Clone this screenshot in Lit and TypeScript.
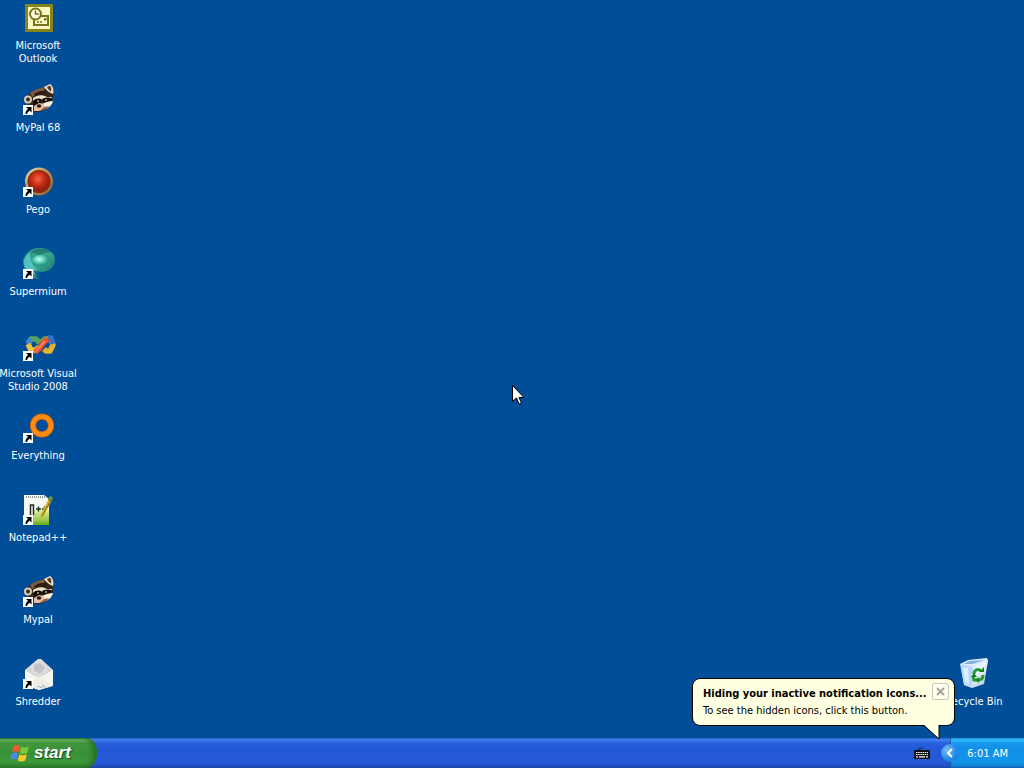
import { LitElement, html, css, svg, TemplateResult, SVGTemplateResult } from "lit";
import { customElement, property } from "lit/decorators.js";

const arrow = svg`
  <rect x="1" y="21" width="10" height="10" fill="#fff"/>
  <path d="M4 23h5.500v5.500l-1.800-1.800c-1.800 1-2.300 1.800-2.500 3.300h-1.700c0-2.600 1-4 2.600-5z" fill="#000"/>`;

const raccoon = svg`
  <path d="M4 14C6 9 11 7 16 5l7-2 5-2c3 2 4 6 3 11 0 6-2 10-7 13-4 3-10 4-14 2l-4-7z" fill="#3a271b"/>
  <path d="M8 9c4-3 10-5 15-6l-1 4-12 6z" fill="#7d5c40"/>
  <path d="M12 10c4-3 9-4 13-3l-2 4-9 3z" fill="#2c1c13"/>
  <path d="M22 3l6-3c3 2 4 6 3 10-3-1-6-3-9-7z" fill="#efe0c4"/>
  <path d="M25 3l3-1.500c1.500 2 1.500 4 1 6-2-1-3-2-4-4.500z" fill="#5d3c27"/>
  <circle cx="6" cy="15.500" r="3" fill="#3b2b20" stroke="#d8cbb4" stroke-width="2"/>
  <path d="M11 14c4-3 9-4 14-1l5 0-1 2c-4 0-6 0-9 1-3 0-6 1-9 2z" fill="#f3e3c6"/>
  <path d="M11 17c3-3 7-3 9-1l-1 5-7 1zM20 15c4-2 8-2 10 0l-2 4-6 1z" fill="#120d0b"/>
  <path d="M20 20c4-2 7-3 11-3-1 4-4 7-8 8l-4-2z" fill="#fff2da"/>
  <path d="M12 22l5-3 5 1c1 3-1 6-5 7h-5z" fill="#e9c0a5"/>
  <ellipse cx="17" cy="22" rx="2.300" ry="1.800" fill="#2a1915"/>
  <path d="M22 23l5-1c-2 3-5 4-9 5z" fill="#9c6340"/>
  <circle cx="16" cy="17" r="1" fill="#c9b08c"/><circle cx="24" cy="16" r="1" fill="#c9b08c"/>${arrow}`;

const ICONS: Record<string, SVGTemplateResult> = {
  outlook: svg`
    <rect x="3" y="2" width="28" height="28" fill="#85851a"/>
    <rect x="6" y="5" width="22" height="22" fill="#fbf6c4"/>
    <rect x="12" y="14" width="14" height="9" fill="#fbf6c4" stroke="#77751a" stroke-width="2"/>
    <circle cx="13.500" cy="12" r="5.500" fill="#fffbe0" stroke="#77751a" stroke-width="2"/>
    <path d="M13.500 8.500V12H17" fill="none" stroke="#77751a" stroke-width="1.500"/>
    <path d="M15 20h6" stroke="#77751a" stroke-width="1.500" stroke-dasharray="2 1"/>
    <rect x="22" y="16" width="2.500" height="2.500" fill="#77751a"/>`,
  raccoon,
  pego: svg`
    <defs>
      <linearGradient id="ring" x1="0" y1="0" x2="1" y2="1"><stop offset="0" stop-color="#e9dfb4"/><stop offset=".5" stop-color="#b98c54"/><stop offset="1" stop-color="#8a5a2c"/></linearGradient>
      <radialGradient id="ball" cx=".45" cy=".38"><stop offset="0" stop-color="#f2684a"/><stop offset=".6" stop-color="#cc2c14"/><stop offset="1" stop-color="#98200e"/></radialGradient>
    </defs>
    <circle cx="17" cy="15.500" r="14" fill="url(#ring)"/>
    <circle cx="17" cy="15.500" r="11.500" fill="#7a3010"/>
    <circle cx="17" cy="15.500" r="10.500" fill="url(#ball)"/>${arrow}`,
  supermium: svg`
    <defs>
      <linearGradient id="sea" x1="0" y1="0" x2="1" y2="1"><stop offset="0" stop-color="#2c958e"/><stop offset=".5" stop-color="#38a78f"/><stop offset="1" stop-color="#145f6c"/></linearGradient>
      <radialGradient id="pearl" cx=".4" cy=".35"><stop offset="0" stop-color="#c9fff0"/><stop offset=".6" stop-color="#58cdb2"/><stop offset="1" stop-color="#279983"/></radialGradient>
    </defs>
    <path d="M1 13C3 5 9 0 17 0c8 0 16 4 16 12 0 7-6 12-13 12-3 0-5-1-6-1l2 8c-8-1-14-6-15-18z" fill="url(#sea)"/>
    <path d="M2 14C3 9 5 6 8 5c0 7 2 12 7 17l-2 4C8 26 2 21 2 14z" fill="#52bfc0"/>
    <path d="M9 4c6-5 17-4 21 1-5-1-9 0-12 2z" fill="#257e72"/>
    <ellipse cx="19" cy="13" rx="9" ry="6" fill="url(#pearl)"/>
    <path d="M12 22l4 2 1 7-3-1z" fill="#1e5f91"/>${arrow}`,
  studio: svg`
    <g fill="none" stroke-width="5.500" stroke-linejoin="round">
      <path d="M6 14l3-5h5l4 4" stroke="#57a45a"/>
      <path d="M6 14l3-5" stroke="#3e86cf"/>
      <path d="M6 14l3 6h5l3-3" stroke="#e9c43a"/>
      <path d="M22 19l2 2h4l3-6-2-5" stroke="#e2b22e"/>
      <path d="M20 12l3-3h5" stroke="#6ab04c"/>
      <path d="M26 8h3l2 6" stroke="#396fc6"/>
      <path d="M13 22l4-3 5-7 4-3" stroke="#e94f2c"/>
      <path d="M14 21l9-10" stroke="#ff8059" stroke-width="2"/>
    </g>${arrow}`,
  everything: svg`
    <circle cx="20" cy="13.500" r="9" fill="none" stroke="#e86b00" stroke-width="6"/>
    <circle cx="20" cy="13.500" r="9" fill="none" stroke="#ff8d14" stroke-width="4"/>${arrow}`,
  notepad: svg`
    <defs><linearGradient id="lime" x1="0" y1="0" x2="0" y2="1"><stop offset="0" stop-color="#e4f4b0"/><stop offset="1" stop-color="#6aac14"/></linearGradient></defs>
    <path d="M2 1h20l5 4v26H2z" fill="#f5f8f4"/>
    <path d="M4 3h19" stroke="#8c9c90" stroke-width="2" stroke-dasharray="1 1"/>
    <path d="M11 16h16v15H11z" fill="url(#lime)"/>
    <path d="M12 20h13M12 23h13M12 26h13" stroke="#b8d878" stroke-dasharray="2 1"/>
    <path d="M8.500 22V11h3v10M14 15h5m-2.500-2.500v5M20 15h5m-2.500-2.500v5" fill="none" stroke="#23301d" stroke-width="1.500"/>
    <path d="M28 2l3 2-9 18-4 4 1-6z" fill="#d9b52e"/>
    <path d="M28 2l3 2-2 4-3-2z" fill="#64952b"/>
    <path d="M29 6l-9 16" stroke="#82651c"/>${arrow}`,
  shredder: svg`
    <path d="M3 12L16 1l3 0 12 11v16l-14 4-14-5z" fill="#e2e2df"/>
    <path d="M5 12L17 2l12 10-6 6H10z" fill="#d2d3d4"/>
    <path d="M8 8l6-5 4-1 7 6 1 5-8 5-7-3z" fill="#dcdbdd"/>
    <path d="M12 7l6-2 5 5-5 6-6-3z" fill="#c3c2c8"/>
    <path d="M3 12l13 8-13 8zM31 12l-14 8 14 8z" fill="#f5f4ef"/>
    <path d="M5 28l11-9 2 0 12 9-13 4z" fill="#eeede6"/>
    <path d="M15 30l2-2 2 2 2-3 2 3" fill="none" stroke="#9db6c9"/>${arrow}`,
  bin: svg`
    <defs><linearGradient id="glass" x1="0" y1="0" x2="1" y2="1"><stop offset="0" stop-color="#a9ccf4"/><stop offset=".5" stop-color="#eef6ff"/><stop offset="1" stop-color="#a9c2dc"/></linearGradient></defs>
    <path d="M2 6l27-5 1 2-4 23-12 4-8-3z" fill="url(#glass)"/>
    <path d="M2 6L10 2l19-2 1 3-15 5z" fill="#dcecff"/>
    <path d="M6 6l5-3 15-1-11 4z" fill="#86b1e3"/>
    <path d="M3 7l12 2-1 20-8-3z" fill="#b5d6fa"/>
    <path d="M5 9l5 1 1 16-4-2z" fill="#deeeff"/>
    <g fill="none" stroke="#259a2e" stroke-width="3">
      <path d="M16 16c0-4 4-6 7-3"/><path d="M25 17c0 4-2 5-5 5"/><path d="M15 18l1 4h3"/>
    </g>
    <path d="M21 14h5V9zM21 19v6l-4-3zM13 19h6l-3-4z" fill="#188222"/>`,
};

@customElement("desktop-icon")
export class DesktopIcon extends LitElement {
  @property() icon = "";
  @property({ attribute: false }) lines: string[] = [];

  static styles = css`
    :host { display: block; }
    .item {
      display: flex; flex-direction: column; align-items: center; gap: 5px;
      width: 76px; height: 82px; padding: 2px 0 0; border: 0; background: none;
      color: #fff; font: inherit; line-height: 13px; text-align: center;
    }
    .picture { width: 32px; height: 32px; flex: none; overflow: visible; }
    .line { display: block; white-space: nowrap; }
    .label { display: flex; flex-direction: column; align-items: center; }
  `;

  render(): TemplateResult {
    return html`<button class="item" type="button">
      <svg class="picture" viewBox="0 0 32 32" aria-hidden="true">${ICONS[this.icon]}</svg>
      <span class="label">${this.lines.map((l) => html`<span class="line">${l}</span>`)}</span>
    </button>`;
  }
}

@customElement("tray-balloon")
export class TrayBalloon extends LitElement {
  static styles = css`
    :host { display: block; }
    .balloon {
      position: relative; box-sizing: border-box; width: 263px; padding: 6px 5px 7px 10px;
      background: #ffffe1; border: 1px solid #000; border-radius: 8px; color: #000;
    }
    .head { display: flex; justify-content: space-between; align-items: flex-start; height: 17px; }
    .title { margin: 0; font-size: 11px; line-height: 17px; white-space: nowrap; }
    .text { margin: 0; line-height: 17px; height: 16px; white-space: nowrap; }
    .close {
      flex: none; width: 17px; height: 17px; margin-top: -2px; padding: 0; display: grid; place-items: center;
      border: 1px solid #c9c8b4; border-radius: 2px; background: #fffff0;
    }
    .tail { position: absolute; right: 14px; top: 100%; display: block; }
  `;

  render(): TemplateResult {
    return html`<section class="balloon">
      <div class="head">
        <h2 class="title">Hiding your inactive notification icons...</h2>
        <button class="close" type="button" aria-label="Close">
          <svg width="9" height="9" viewBox="0 0 9 9"><path d="M1 1l7 7M8 1L1 8" stroke="#a5a498" stroke-width="2"/></svg>
        </button>
      </div>
      <p class="text">To see the hidden icons, click this button.</p>
      <svg class="tail" width="16" height="15" viewBox="0 0 16 15"><path d="M0 0h15v14z" fill="#ffffe1"/><path d="M0 .5L15 14V0" fill="none" stroke="#000"/></svg>
    </section>`;
  }
}

@customElement("task-bar")
export class TaskBar extends LitElement {
  static styles = css`
    :host { display: block; }
    .bar {
      display: flex; align-items: stretch; height: 30px;
      background: linear-gradient(#2a5fd0 0, #4186f0 2px, #2c66e0 4px, #245ad8 8px, #2459da 25px, #2050c4 28px, #1b419e 30px);
    }
    .start {
      display: flex; align-items: center; gap: 4px; width: 97px; padding: 0 0 1px 10px; border: 0;
      border-radius: 0 10px 10px 0 / 0 15px 15px 0; color: #fff;
      font: italic bold 17px/22px "Liberation Sans", sans-serif;
      text-shadow: 1px 1px 1px #1b4a17;
      background: linear-gradient(#2b7829 0, #69b467 2px, #42963f 5px, #389137 15px, #3c983a 24px, #2c7a2a 30px);
      box-shadow: inset -5px 0 6px -2px #226a22;
    }
    .flag { flex: none; }
    .notify { margin-left: auto; display: flex; align-items: center; padding-right: 20px; }
    .keys { display: block; }
    .tray {
      position: relative; display: flex; align-items: center; justify-content: flex-end; padding: 0 16px; width: 41px;
      color: #fff; white-space: nowrap; border-left: 1px solid #1659b0;
      background: linear-gradient(#1290e0 0, #37bdf8 2px, #1897ee 5px, #1290e8 10px, #1295ea 24px, #107fd0 28px, #0c62b0 30px);
    }
    .chevron {
      position: absolute; left: -10px; top: 6px; width: 18px; height: 18px; padding: 0; border: 0; border-radius: 50%;
      display: grid; place-items: center; background: radial-gradient(circle at 35% 35%, #79c2fb, #2489e8 55%, #1670d4);
    }
  `;

  render(): TemplateResult {
    return html`<footer class="bar">
      <button class="start" type="button">
        <svg class="flag" width="20" height="18" viewBox="0 0 20 18" aria-hidden="true">
          <path d="M3.500 2C6 .5 8 .6 10 2L8.500 8.500C6.500 7 4.500 7 2 8.300z" fill="#ef5a2c"/>
          <path d="M11 2.500c2.500 1.500 5 1.300 8 0l-1.800 6.500c-2.500 1.400-5 1.400-7.500 0z" fill="#7cc63a"/>
          <path d="M1.700 9.500c2.500-1.300 4.500-1.300 6.500 0L6.600 15.800c-2-1.300-4-1.300-6.500 0z" fill="#4a8be8"/>
          <path d="M9.400 10.200c2.500 1.300 5 1.300 7.500 0l-1.700 6.300c-2.500 1.400-5 1.400-7.500 0z" fill="#fbc92f"/>
        </svg>
        <span>start</span>
      </button>
      <div class="notify">
        <svg class="keys" width="16" height="14" viewBox="0 0 16 14" role="img" aria-label="Keyboard">
          <path d="M4 4c0-3 4 0 5-3" fill="none" stroke="#0b1e52"/>
          <rect x="0" y="4" width="16" height="9" rx="1" fill="#111"/>
          <path d="M2 6.500h12M2 8.500h12" stroke="#fff" stroke-width="1.200" stroke-dasharray="1.500 .7"/>
          <path d="M2 10.800h2m1 0h6m1 0h2" stroke="#fff" stroke-width="1.200"/>
        </svg>
      </div>
      <div class="tray">
        <button class="chevron" type="button" aria-label="Show hidden icons">
          <svg width="8" height="10" viewBox="0 0 8 10"><path d="M6 1L2 5l4 4" fill="none" stroke="#fff" stroke-width="2"/></svg>
        </button>
        <time>6:01 AM</time>
      </div>
    </footer>`;
  }
}

@customElement("app-root")
export class AppRoot extends LitElement {
  static styles = css`
    :host {
      display: flex; flex-direction: column; height: 100vh; overflow: hidden; background: #004e98;
      font: 11px/13px Tahoma, "DejaVu Sans Condensed", "DejaVu Sans", sans-serif;
    }
    .desktop { position: relative; flex: 1; min-height: 0; display: flex; justify-content: space-between; }
    .column { display: flex; flex-direction: column; }
    .right { justify-content: flex-end; padding-right: 12px; }
    .balloon { position: absolute; right: 69px; bottom: 12px; }
    .cursor { position: absolute; left: 50%; top: 385px; }
  `;

  private items: [string, string[]][] = [
    ["outlook", ["Microsoft", "Outlook"]],
    ["raccoon", ["MyPal 68"]],
    ["pego", ["Pego"]],
    ["supermium", ["Supermium"]],
    ["studio", ["Microsoft Visual", "Studio 2008"]],
    ["everything", ["Everything"]],
    ["notepad", ["Notepad++"]],
    ["raccoon", ["Mypal"]],
    ["shredder", ["Shredder"]],
  ];

  render(): TemplateResult {
    return html`
      <main class="desktop">
        <div class="column">
          ${this.items.map(([icon, lines]) => html`<desktop-icon .icon=${icon} .lines=${lines}></desktop-icon>`)}
        </div>
        <div class="column right">
          <desktop-icon .icon=${"bin"} .lines=${["Recycle Bin"]}></desktop-icon>
        </div>
        <tray-balloon class="balloon"></tray-balloon>
        <svg class="cursor" width="12" height="20" viewBox="0 0 12 20" aria-hidden="true">
          <path d="M.5 .5v16l4-3.500 2.500 6 2.500-1-2.500-5.500h5z" fill="#fff" stroke="#000"/>
        </svg>
      </main>
      <task-bar></task-bar>`;
  }
}
